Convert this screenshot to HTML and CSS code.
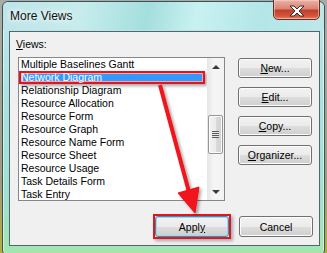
FILE: index.html
```html
<!DOCTYPE html>
<html lang="en">
<head>
    <meta charset="UTF-8">
    <title>More Views</title>
    <link rel="stylesheet" href="styles.css">
</head>
<body>
    <div class="window">
        <div class="titlebar">
            <span class="title">More Views</span>
            <div class="close">
                <svg width="18" height="12" viewBox="0 0 18 12">
                    <path d="M2 1h4l3 3 3-3h4l-5 5 5 5h-4l-3-3-3 3H2l5-5z" fill="#fff" stroke="#3a2a2a" stroke-width="1" stroke-linejoin="round"/>
                </svg>
            </div>
        </div>
        <div class="client">
            <div class="main">
                <div class="views">
                    <div class="label"><u>V</u>iews:</div>
                    <div class="listbox">
                        <ul class="items">
                            <li>Multiple Baselines Gantt</li>
                            <li class="selected">Network Diagram</li>
                            <li>Relationship Diagram</li>
                            <li>Resource Allocation</li>
                            <li>Resource Form</li>
                            <li>Resource Graph</li>
                            <li>Resource Name Form</li>
                            <li>Resource Sheet</li>
                            <li>Resource Usage</li>
                            <li>Task Details Form</li>
                            <li>Task Entry</li>
                        </ul>
                        <div class="scrollbar">
                            <div class="arrow"><span class="tri up"></span></div>
                            <div class="track">
                                <div class="thumb"><span class="grip"></span></div>
                            </div>
                            <div class="arrow"><span class="tri down"></span></div>
                        </div>
                    </div>
                </div>
                <div class="side-buttons">
                    <button class="btn"><u>N</u>ew...</button>
                    <button class="btn"><u>E</u>dit...</button>
                    <button class="btn"><u>C</u>opy...</button>
                    <button class="btn"><u>O</u>rganizer...</button>
                </div>
            </div>
            <div class="footer">
                <button class="btn default marked">Appl<u>y</u></button>
                <button class="btn">Cancel</button>
            </div>
        </div>
    </div>

    <!-- annotation arrow drawn over the dialog -->
    <svg class="annotation" width="327" height="253" viewBox="0 0 327 253">
        <defs>
            <filter id="shadow" x="-20%" y="-20%" width="140%" height="140%">
                <feDropShadow dx="2" dy="2" stdDeviation="1.5" flood-color="#000" flood-opacity="0.35"/>
            </filter>
        </defs>
        <g filter="url(#shadow)" fill="#f0121a" stroke="#f0121a">
            <line x1="160" y1="85" x2="189" y2="192" stroke-width="4"/>
            <polygon points="195,213 178,193 199,187" stroke-width="1" stroke-linejoin="round"/>
        </g>
    </svg>
</body>
</html>
```

FILE: styles.css
```css
body {
    margin: 0;
    width: 327px;
    height: 253px;
    overflow: hidden;
    position: relative;
    background: linear-gradient(to bottom, #a8aca6, #9c9d80 70%, #b4ae3c);
    font-family: "Liberation Sans", Arial, sans-serif;
    font-size: 10.5px;
    color: #000;
}
.window {
    margin: 1px 0 0 2px;
    width: 323px;
    height: 255px;
    box-sizing: border-box;
    border: 1px solid #3d5258;
    border-radius: 6px;
    background: linear-gradient(to bottom, #c2e7ea 0%, #a9e1e2 40%, #9fe0cf 80%, #a4e6ae 100%);
    box-shadow: inset 0 0 0 1px rgba(255, 255, 255, 0.55);
}
.titlebar {
    height: 28px;
    display: flex;
    justify-content: space-between;
    align-items: flex-start;
    padding-left: 7px;
    border-radius: 6px 6px 0 0;
    background: linear-gradient(100deg, #bde4e8 0%, #c6ecec 25%, #a4dede 45%, #c9f1f1 60%, #b3e6e8 80%, #bfe7ea 100%);
}
.title {
    font-size: 12px;
    line-height: 28px;
    color: #101010;
    text-shadow: 0 0 6px #fff, 0 0 10px #fff;
}
.close {
    width: 47px;
    height: 21px;
    margin: -3px 4px 0 0;
    box-sizing: border-box;
    border: 1px solid #6a2d22;
    border-radius: 0 0 5px 5px;
    background: linear-gradient(to bottom, #eab3a6 0%, #d98574 45%, #c0402a 55%, #d4563c 85%, #e58a6c 100%);
    box-shadow: inset 0 0 0 1px rgba(255, 220, 210, 0.5);
    display: flex;
    align-items: center;
    justify-content: center;
    padding-top: 2px;
}
.client {
    margin: 1px 4px 0 6px;
    height: 215px;
    box-sizing: border-box;
    border: 1px solid #52666b;
    background: #f0f0f0;
    padding: 6px 0 0 8px;
}
.main {
    display: flex;
    gap: 13px;
}
.label {
    height: 13px;
    line-height: 13px;
    margin-left: -2px;
}
.listbox {
    margin-top: 6px;
    width: 207px;
    height: 144px;
    box-sizing: border-box;
    border: 1px solid #828790;
    background: #fff;
    display: flex;
    overflow: hidden;
}
.items {
    list-style: none;
    margin: 0;
    padding: 0;
    flex: 1;
}
.items li {
    height: 13px;
    line-height: 13px;
    padding-left: 2px;
    white-space: nowrap;
}
.items li.selected {
    margin-right: 2px;
    background: #3399ff;
    color: #fff;
    box-shadow: inset 0 0 0 2px #e3141c, inset 0 0 0 3px #f4a6a6, 2px 2px 3px rgba(0, 0, 0, 0.35);
}
.scrollbar {
    width: 17px;
    display: flex;
    flex-direction: column;
    background: linear-gradient(to right, #e6e6e6, #f5f5f5 40%, #f3f3f3);
}
.arrow {
    height: 17px;
    display: flex;
    align-items: center;
    justify-content: center;
}
.tri {
    width: 0;
    height: 0;
    border-left: 4px solid transparent;
    border-right: 4px solid transparent;
}
.tri.up {
    border-bottom: 4px solid #3a3a3a;
}
.tri.down {
    border-top: 4px solid #3a3a3a;
}
.track {
    flex: 1;
    padding-top: 40px;
}
.thumb {
    margin: 0 1px;
    height: 39px;
    box-sizing: border-box;
    border: 1px solid #979797;
    border-radius: 2px;
    background: linear-gradient(to right, #f3f3f3, #ebebeb 50%, #dbdbdb 51%, #d0d0d0);
    box-shadow: inset 0 0 0 1px #fbfbfb;
    display: flex;
    align-items: center;
    justify-content: center;
}
.grip {
    width: 7px;
    height: 7px;
    background: repeating-linear-gradient(to bottom, #5a5a5a 0, #5a5a5a 1px, #e8e8e8 1px, #e8e8e8 2px);
}
.side-buttons {
    margin-top: 20px;
    display: flex;
    flex-direction: column;
    gap: 9px;
}
.btn {
    width: 74px;
    height: 20px;
    padding: 0;
    border: 1px solid #707070;
    border-radius: 3px;
    background: linear-gradient(to bottom, #f2f2f2 0%, #ebebeb 50%, #dddddd 51%, #cfcfcf 100%);
    box-shadow: inset 0 0 0 1px #fcfcfc;
    font-family: "Liberation Sans", Arial, sans-serif;
    font-size: 10.5px;
    color: #000;
}
.footer {
    margin-top: 15px;
    padding-right: 6px;
    display: flex;
    justify-content: flex-end;
    gap: 10px;
}
.footer .btn {
    height: 21px;
}
.btn.default {
    border-color: #3c8fb8;
    box-shadow: inset 0 0 0 1px #8fdcf4;
}
.btn.marked {
    position: relative;
}
.btn.marked::after {
    content: "";
    position: absolute;
    inset: -3px;
    border: 2px solid #e3141c;
    box-shadow: 2px 2px 3px rgba(0, 0, 0, 0.3);
}
.annotation {
    position: absolute;
    left: 0;
    top: 0;
    pointer-events: none;
}
```
